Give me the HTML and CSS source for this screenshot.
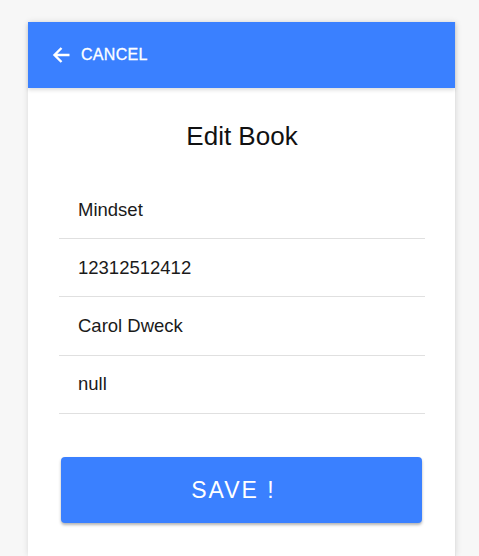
FILE: index.html
```html
<!DOCTYPE html>
<html>
<head>
<meta charset="utf-8">
<link rel="stylesheet" href="styles.css">
</head>
<body>
<div class="card">
  <header class="bar">
    <a class="cancel">
      <svg class="arrow" viewBox="0 0 18 18" width="18" height="18"><path d="M17.5 9H2.5M9.5 2L2.5 9l7 7" fill="none" stroke="#fff" stroke-width="2.4" stroke-linejoin="miter"/></svg>
      <span>CANCEL</span>
    </a>
  </header>
  <main class="content">
    <h1 class="title">Edit Book</h1>
    <form class="form">
      <div class="field">Mindset</div>
      <div class="field">12312512412</div>
      <div class="field">Carol Dweck</div>
      <div class="field">null</div>
      <button type="button" class="save">SAVE !</button>
    </form>
  </main>
</div>
</body>
</html>
```
FILE: styles.css
```css
html, body {
  margin: 0;
  padding: 0;
  background: #f7f7f7;
  font-family: "Liberation Sans", Arial, sans-serif;
  overflow: hidden;
}
body {
  padding: 22px 23px 0 28px;
  height: 556px;
  box-sizing: border-box;
}
.card {
  width: 428px;
  height: 534px;
  background: #fff;
  box-shadow: 0 0 6px rgba(0,0,0,0.12);
  border-right: 1px solid #e4e4e4;
  box-sizing: border-box;
}
.bar {
  height: 66px;
  background: #3a80ff;
  display: flex;
  align-items: center;
  padding-left: 24px;
  box-shadow: 0 2px 4px rgba(0,0,0,0.14);
  position: relative;
}
.cancel {
  display: flex;
  align-items: center;
  gap: 11px;
  color: #fff;
  font-size: 16px;
  letter-spacing: 0.3px;
  -webkit-text-stroke: 0.3px #fff;
}
.arrow {
  display: block;
}
.content {
  padding: 32px 30px 0 31px;
}
.title {
  margin: 0;
  text-align: center;
  font-weight: normal;
  font-size: 26px;
  line-height: 32px;
  color: #111;
}
.form {
  margin-top: 29px;
  display: flex;
  flex-direction: column;
}
.field {
  height: 57px;
  display: flex;
  align-items: center;
  padding-left: 19px;
  font-size: 18.5px;
  color: #1a1a1a;
  border-bottom: 1px solid #e0e0e0;
  margin-bottom: 0.3px;
}
.save {
  margin: 43px 3px 0 2px;
  height: 66px;
  padding: 0 16px 0 0;
  border: none;
  border-radius: 4px;
  background: #3a80ff;
  color: #fff;
  font-family: "Liberation Sans", Arial, sans-serif;
  font-size: 23px;
  letter-spacing: 2px;
  box-shadow: 0 2px 3px rgba(0,0,0,0.3);
}
```
